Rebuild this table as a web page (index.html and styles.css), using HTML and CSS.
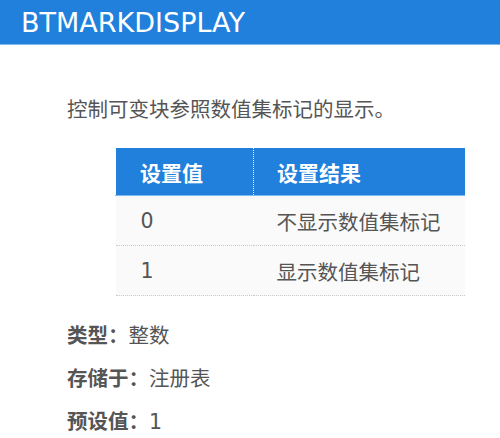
FILE: index.html
```html
<!DOCTYPE html>
<html lang="zh-CN">
<head>
    <meta charset="UTF-8">
    <meta name="viewport" content="width=device-width, initial-scale=1.0">
    <title>BTMARKDISPLAY</title>
    <link rel="stylesheet" href="styles.css">
</head>
<body>
    <div class="header">
        <h1>BTMARKDISPLAY</h1>
    </div>
    <div class="content">
        <p class="intro">控制可变块参照数值集标记的显示。</p>
        <table class="values">
            <thead>
                <tr>
                    <th class="col-value">设置值</th>
                    <th>设置结果</th>
                </tr>
            </thead>
            <tbody>
                <tr>
                    <td>0</td>
                    <td>不显示数值集标记</td>
                </tr>
                <tr>
                    <td>1</td>
                    <td>显示数值集标记</td>
                </tr>
            </tbody>
        </table>
        <div class="meta">
            <div><span class="label">类型：</span>整数</div>
            <div><span class="label">存储于：</span>注册表</div>
            <div><span class="label">预设值：</span>1</div>
        </div>
    </div>
</body>
</html>
```

FILE: styles.css
```css
:root {
    --blue: #2180dc;
    --text: #555555;
}

html {
    background-color: #ffffff;
    color: var(--text);
    font-family: "DejaVu Sans", "Noto Sans CJK SC", sans-serif;
    font-size: 20.5px;
}

body {
    margin: 0;
    padding: 0;
}

.header {
    height: 44px;
    background-color: var(--blue);
    border-bottom: 1px solid #7db8ef;
    display: flex;
    align-items: center;
    padding-left: 21px;
}

.header h1 {
    margin: 0;
    color: #ffffff;
    font-size: 27px;
    font-weight: normal;
}

.content {
    padding: 50px 0 0 67px;
}

.intro {
    margin: 0;
    line-height: 30px;
}

.values {
    border-collapse: collapse;
    width: 350px;
    margin-top: 22px;
    margin-left: 48px;
}

.values th {
    height: 47px;
    padding: 0 0 0 23px;
    text-align: left;
    color: #ffffff;
    background-color: var(--blue);
    font-weight: bold;
    font-size: 21px;
    border-top: 1px dotted #ffffff;
    border-left: 1px dotted #ffffff;
    border-bottom: 1px solid #7db8ef;
}

.values th.col-value {
    width: 113px;
    padding-left: 24px;
}

.values td {
    height: 49px;
    padding: 0 0 0 23px;
    background-color: #fafafa;
    border-bottom: 1px dotted #c8c8c8;
}

.values td:first-child {
    padding-left: 25px;
}

.meta {
    margin-top: 19px;
    line-height: 43px;
}

.meta .label {
    font-weight: bold;
}
```
